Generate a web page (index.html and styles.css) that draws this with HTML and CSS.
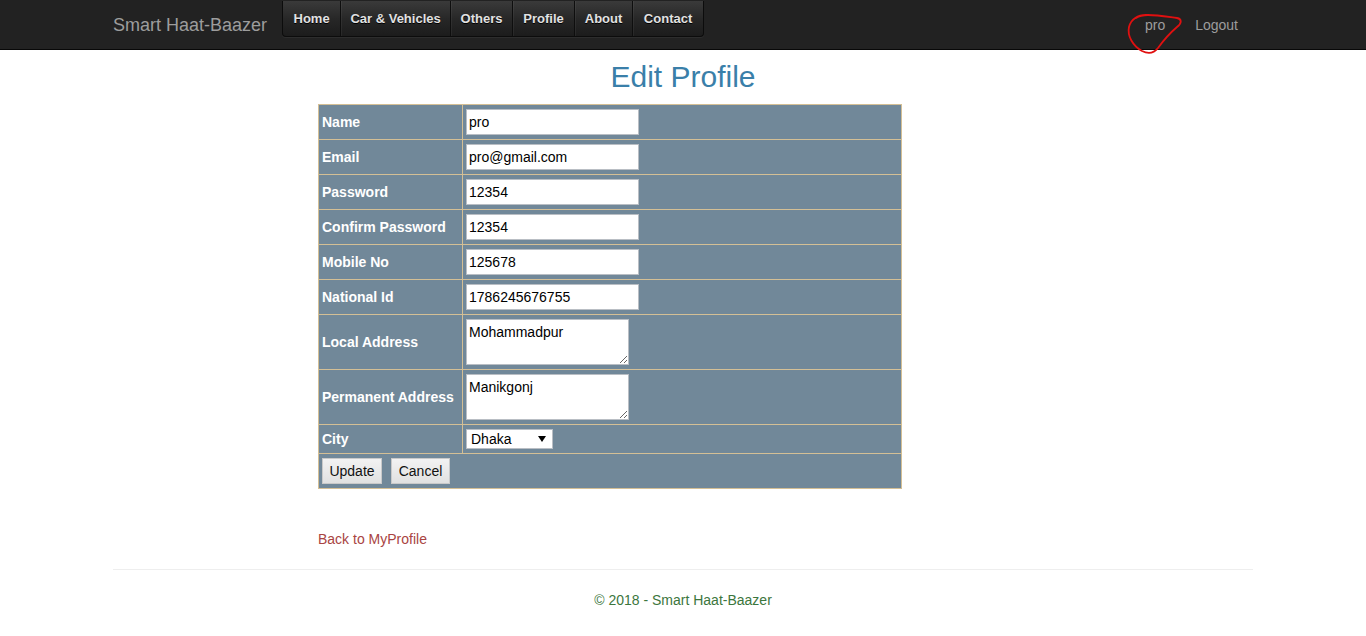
FILE: index.html
```html
<!DOCTYPE html>
<html>
<head>
<meta charset="utf-8">
<title>Edit Profile - Smart Haat-Baazer</title>
<link rel="stylesheet" href="styles.css">
</head>
<body>
<header class="navbar">
  <div class="nav-container">
    <a class="brand" href="#">Smart Haat-Baazer</a>
    <ul class="menu">
      <li class="m-home"><a href="#">Home</a></li>
      <li class="m-car"><a href="#">Car &amp; Vehicles</a></li>
      <li class="m-others"><a href="#">Others</a></li>
      <li class="m-profile"><a href="#">Profile</a></li>
      <li class="m-about"><a href="#">About</a></li>
      <li class="m-contact"><a href="#">Contact</a></li>
    </ul>
    <ul class="nav-right">
      <li><a href="#">pro</a></li>
      <li><a href="#">Logout</a></li>
    </ul>
  </div>
  <svg class="scribble" width="70" height="50" viewBox="1120 10 70 50">
    <path d="M1146 15 C1138 15 1131 19 1129 27 C1127 36 1133 46 1142 51 C1148 54 1154 53 1158 48 C1163 41 1170 33 1177 27 C1182 23 1182 19 1177 18 C1169 17 1158 15 1148 15 C1143 15 1139 16 1136 18" fill="none" stroke="#e01010" stroke-width="1.8" stroke-linecap="round"/>
  </svg>
</header>

<main class="body-content">
  <h2 class="title">Edit Profile</h2>
  <div class="form-col">
    <form>
      <table class="edit-table">
        <tr class="row">
          <td class="lbl">Name</td>
          <td class="fld"><input class="txt" type="text" value="pro"></td>
        </tr>
        <tr class="row">
          <td class="lbl">Email</td>
          <td class="fld"><input class="txt" type="text" value="pro@gmail.com"></td>
        </tr>
        <tr class="row">
          <td class="lbl">Password</td>
          <td class="fld"><input class="txt" type="text" value="12354"></td>
        </tr>
        <tr class="row">
          <td class="lbl">Confirm Password</td>
          <td class="fld"><input class="txt" type="text" value="12354"></td>
        </tr>
        <tr class="row">
          <td class="lbl">Mobile No</td>
          <td class="fld"><input class="txt" type="text" value="125678"></td>
        </tr>
        <tr class="row">
          <td class="lbl">National Id</td>
          <td class="fld"><input class="txt" type="text" value="1786245676755"></td>
        </tr>
        <tr class="row-tall">
          <td class="lbl">Local Address</td>
          <td class="fld"><textarea class="area">Mohammadpur</textarea></td>
        </tr>
        <tr class="row-tall">
          <td class="lbl">Permanent Address</td>
          <td class="fld"><textarea class="area">Manikgonj</textarea></td>
        </tr>
        <tr class="row-city">
          <td class="lbl">City</td>
          <td class="fld">
            <span class="select-wrap">
              <select class="sel"><option>Dhaka</option><option>Chittagong</option><option>Khulna</option></select>
            </span>
          </td>
        </tr>
        <tr class="row">
          <td class="btns" colspan="2">
            <div class="btn-row">
              <button type="button" class="btn btn-update">Update</button>
              <button type="button" class="btn btn-cancel">Cancel</button>
            </div>
          </td>
        </tr>
      </table>
    </form>
    <p class="back"><a href="#">Back to MyProfile</a></p>
  </div>
  <hr class="rule">
  <footer class="footer">
    <p>© 2018 - Smart Haat-Baazer</p>
  </footer>
</main>
</body>
</html>
```

FILE: styles.css
```css
* { box-sizing: border-box; }

html, body {
  margin: 0;
  padding: 0;
  background: #fff;
  font-family: "Liberation Sans", Arial, sans-serif;
  font-size: 14px;
  line-height: 20px;
  color: #333;
}

a { text-decoration: none; }

/* ---------- navbar ---------- */
.navbar {
  position: relative;
  height: 50px;
  background: #222;
  border-bottom: 1px solid #080808;
}

.nav-container {
  width: 1170px;
  margin: 0 auto;
  padding: 0 15px;
  display: flex;
  align-items: flex-start;
  height: 49px;
}

.brand {
  display: block;
  padding: 15px 15px 0 0;
  font-size: 18px;
  line-height: 20px;
  color: #9d9d9d;
}

.menu {
  list-style: none;
  margin: 1px 0 0 0;
  padding: 0;
  display: flex;
  height: 36px;
  border: 1px solid #0c0c0c;
  border-top: none;
  border-radius: 0 0 4px 4px;
  background: linear-gradient(#3a3a3a, #262626 55%, #1c1c1c);
  box-shadow: 0 1px 1px rgba(255,255,255,0.06);
  overflow: hidden;
}

.menu li {
  border-left: 1px solid #0e0e0e;
  box-shadow: inset 1px 0 0 rgba(255,255,255,0.05);
}
.menu li:first-child { border-left: none; box-shadow: none; }

.menu a {
  display: block;
  height: 35px;
  padding-top: 9px;
  text-align: center;
  font-size: 13px;
  font-weight: bold;
  line-height: 17px;
  color: #e2e2e2;
  text-shadow: 0 1px 0 #000;
}

.m-home a { width: 57px; }
.m-car a { width: 109px; }
.m-others a { width: 61px; }
.m-profile a { width: 61px; }
.m-about a { width: 57px; }
.m-contact a { width: 70px; }

.nav-right {
  list-style: none;
  margin: 0 0 0 auto;
  padding: 0;
  display: flex;
}

.nav-right a {
  display: block;
  padding: 15px;
  line-height: 20px;
  color: #9d9d9d;
}

.scribble {
  position: absolute;
  left: 1120px;
  top: 10px;
  overflow: visible;
  z-index: 5;
}

/* ---------- content ---------- */
.body-content {
  width: 1170px;
  margin: 0 auto;
  padding: 0 15px;
}

.title {
  margin: 10px 0 11px;
  text-align: center;
  font-size: 30px;
  font-weight: normal;
  line-height: 33px;
  color: #3a7fa9;
}

.form-col {
  padding-left: 205px;
}

.edit-table {
  width: 584px;
  border-collapse: collapse;
  background: #718899;
  border: 1px solid #d4bf95;
}

.edit-table td {
  border: 1px solid #d4bf95;
  padding: 3px 3px;
  vertical-align: middle;
}

.lbl {
  width: 144px;
  color: #fff;
  font-weight: bold;
  font-size: 14px;
  line-height: 16px;
  padding-top: 2px !important;
}

.row td { height: 35px; }
.row-tall td { height: 55px; }
.row-city td { height: 29px; }

.txt {
  display: block;
  width: 173px;
  height: 26px;
  margin: 0;
  padding: 0 2px 1px;
  border: 1px solid #b9bec4;
  background: #fff;
  font-family: "Liberation Sans", Arial, sans-serif;
  font-size: 14px;
  color: #000;
  outline: none;
}

.area {
  display: block;
  width: 163px;
  height: 46px;
  margin: 0;
  padding: 4px 2px 2px;
  border: 1px solid #b9bec4;
  background: #fff;
  font-family: "Liberation Sans", Arial, sans-serif;
  font-size: 14px;
  line-height: 16px;
  color: #000;
}

.select-wrap {
  position: relative;
  display: block;
  width: 87px;
  height: 20px;
}

.sel {
  appearance: none;
  -webkit-appearance: none;
  display: block;
  width: 87px;
  height: 20px;
  margin: 0;
  padding: 0 4px;
  border: 1px solid #b9bec4;
  border-radius: 0;
  background: #fff;
  font-family: "Liberation Sans", Arial, sans-serif;
  font-size: 14px;
  line-height: 18px;
  color: #000;
}

.select-wrap::after {
  content: "";
  position: absolute;
  right: 7px;
  top: 7px;
  border-left: 4px solid transparent;
  border-right: 4px solid transparent;
  border-top: 6px solid #000;
  pointer-events: none;
}

.btns {
  padding: 3px 3px 4px !important;
}

.btn-row {
  display: flex;
  gap: 9px;
}

.btn {
  height: 26px;
  margin: 0;
  padding: 0;
  border: 1px solid #c9c9c9;
  border-radius: 0;
  background: linear-gradient(#f2f2f2, #e1e1e1);
  font-family: "Liberation Sans", Arial, sans-serif;
  font-size: 14px;
  color: #111;
}
.btn-update { width: 60px; }
.btn-cancel { width: 59px; }

.back {
  margin: 40px 0 0;
  line-height: 20px;
}
.back a { color: #a94442; }

.rule {
  margin: 20px 0 0;
  border: 0;
  border-top: 1px solid #eee;
}

.footer p {
  margin: 20px 0 10px;
  text-align: center;
  color: #3c763d;
}
```
